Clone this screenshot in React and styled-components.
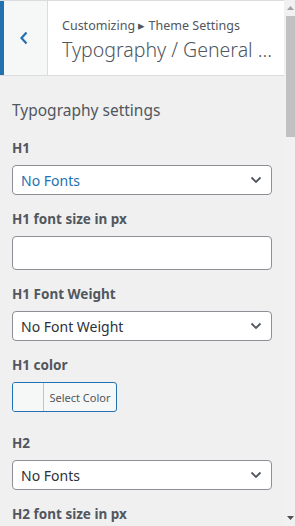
import React from "react";
import styled, { createGlobalStyle } from "styled-components";

const Global = createGlobalStyle`
  html, body { margin: 0; padding: 0; height: 100%; overflow: hidden; }
  body {
    background: #f0f0f1;
    font-family: "Noto Sans", "Open Sans", sans-serif;
    color: #50575e;
  }
  #root { height: 100%; }
`;

const Frame = styled.div`
  display: flex;
  height: 100vh;
  overflow: hidden;
`;

const Pane = styled.div`
  flex: 1;
  min-width: 0;
  overflow: hidden;
  background: #f0f0f1;
`;

const ScrollBar = styled.div`
  flex: 0 0 11px;
  display: flex;
  flex-direction: column;
  background: #f1f1f1;
`;

const ScrollArrow = styled.div`
  flex: 0 0 16px;
  display: flex;
  align-items: center;
  justify-content: center;
  padding-left: 2px;
`;

const Thumb = styled.div`
  flex: 0 0 121px;
  margin-left: 2px;
  background: #c1c1c1;
`;

const ScrollRest = styled.div`
  flex: 1;
`;

const Header = styled.div`
  display: flex;
  height: 74px;
  background: #fff;
  border-top: 1px solid #dcdcde;
  border-bottom: 1px solid #dcdcde;
`;

const BackButton = styled.button`
  flex: 0 0 48px;
  box-sizing: border-box;
  display: flex;
  align-items: center;
  justify-content: center;
  padding: 0 4px 0 0;
  margin: 0;
  border: none;
  border-left: 4px solid #2271b1;
  border-right: 1px solid #dcdcde;
  background: #f6f7f7;
  color: #2271b1;
  cursor: pointer;
`;

const TitleBox = styled.div`
  flex: 1;
  min-width: 0;
  display: flex;
  flex-direction: column;
  justify-content: center;
  padding: 3px 12px 0 14px;
`;

const Crumb = styled.span`
  font-size: 12.5px;
  line-height: 18px;
  color: #50575e;
  white-space: nowrap;
`;

const Title = styled.h3`
  margin: 2px 0 0;
  font-size: 19.5px;
  font-weight: 300;
  line-height: 26px;
  color: #50575e;
  white-space: nowrap;
  overflow: hidden;
  text-overflow: ellipsis;
`;

const Body = styled.div`
  padding: 22px 12px 40px;
`;

const SectionTitle = styled.h4`
  margin: 0 0 16px;
  font-size: 15.5px;
  font-weight: 400;
  line-height: 24px;
  color: #50575e;
`;

const Control = styled.div`
  margin-bottom: 14px;
`;

const Label = styled.label`
  display: block;
  font-size: 13.5px;
  font-weight: 700;
  line-height: 20px;
  color: #50575e;
  margin-bottom: 7px;
`;

const SelectBox = styled.div`
  position: relative;
  height: 30px;
  box-sizing: border-box;
  border: 1px solid #8c8f94;
  border-radius: 4px;
  background: #fff;
  display: flex;
  align-items: center;
  padding: 0 24px 0 8px;
  font-size: 14px;
  color: ${(p) => (p.$active ? "#2271b1" : "#2c3338")};
`;

const Chevron = styled.svg`
  position: absolute;
  right: 9px;
  top: 50%;
  margin-top: -4px;
`;

const TextInput = styled.input`
  display: block;
  width: 100%;
  box-sizing: border-box;
  height: 34px;
  border: 1px solid #8c8f94;
  border-radius: 4px;
  background: #fff;
  font-size: 14px;
  padding: 0 8px;
`;

const ColorButton = styled.button`
  display: flex;
  align-items: stretch;
  height: 30px;
  width: 105px;
  padding: 0;
  margin: 0;
  box-sizing: border-box;
  border: 1px solid #2271b1;
  border-radius: 3px;
  background: #f6f7f7;
  overflow: hidden;
  cursor: pointer;
`;

const Swatch = styled.span`
  flex: 0 0 30px;
  border-right: 1px solid #c3c4c7;
  background: #f6f7f7;
`;

const ColorText = styled.span`
  flex: 1;
  display: flex;
  align-items: center;
  justify-content: center;
  font-family: "Noto Sans", sans-serif;
  font-size: 11px;
  color: #50575e;
`;

const Spacer = styled.div`
  height: 7px;
`;

function Select({ value, active }) {
  return (
    <SelectBox $active={active}>
      {value}
      <Chevron width="12" height="8" viewBox="0 0 12 8">
        <path d="M1.5 1.5 L6 6 L10.5 1.5" fill="none" stroke="#50575e" strokeWidth="1.8" />
      </Chevron>
    </SelectBox>
  );
}

function HeadingGroup({ tag, first }) {
  return (
    <>
      <Control>
        <Label>{tag}</Label>
        <Select value="No Fonts" active={first} />
      </Control>
      <Control>
        <Label>{tag} font size in px</Label>
        <TextInput type="text" />
      </Control>
      <Control>
        <Label>{tag} Font Weight</Label>
        <Select value="No Font Weight" />
      </Control>
      <Control>
        <Label>{tag} color</Label>
        <ColorButton type="button">
          <Swatch />
          <ColorText>Select Color</ColorText>
        </ColorButton>
      </Control>
      <Spacer />
    </>
  );
}

export default function App() {
  return (
    <>
      <Global />
      <Frame>
        <Pane>
          <Header>
            <BackButton aria-label="Back">
              <svg width="10" height="14" viewBox="0 0 10 14">
                <path d="M7.5 1.5 L2.5 7 L7.5 12.5" fill="none" stroke="#2271b1" strokeWidth="2.2" />
              </svg>
            </BackButton>
            <TitleBox>
              <Crumb>Customizing ▸ Theme Settings</Crumb>
              <Title>Typography / General Settings</Title>
            </TitleBox>
          </Header>
          <Body>
            <SectionTitle>Typography settings</SectionTitle>
            {["H1", "H2"].map((t, i) => (
              <HeadingGroup key={t} tag={t} first={i === 0} />
            ))}
          </Body>
        </Pane>
        <ScrollBar aria-hidden="true">
          <ScrollArrow>
            <svg width="7" height="4" viewBox="0 0 7 4">
              <path d="M0 4 L3.5 0 L7 4 Z" fill="#a3a3a3" />
            </svg>
          </ScrollArrow>
          <Thumb />
          <ScrollRest />
          <ScrollArrow>
            <svg width="7" height="4" viewBox="0 0 7 4">
              <path d="M0 0 L3.5 4 L7 0 Z" fill="#505050" />
            </svg>
          </ScrollArrow>
        </ScrollBar>
      </Frame>
    </>
  );
}
